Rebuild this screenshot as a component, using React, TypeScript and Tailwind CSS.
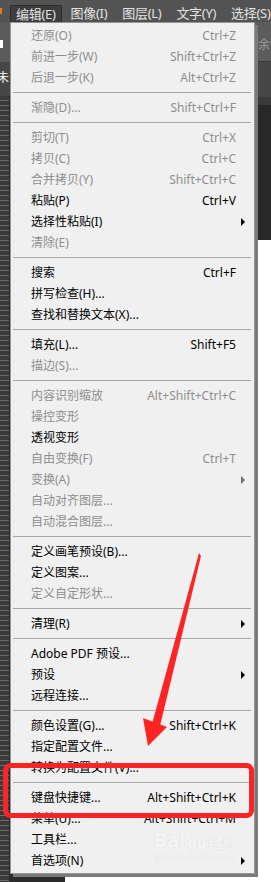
import React from 'react';

type Item = { t: string; s?: string; d?: boolean; sub?: boolean };
type Row = Item | 'sep';

const rows: Row[] = [
  { t: '还原(O)', s: 'Ctrl+Z', d: true },
  { t: '前进一步(W)', s: 'Shift+Ctrl+Z', d: true },
  { t: '后退一步(K)', s: 'Alt+Ctrl+Z', d: true },
  'sep',
  { t: '渐隐(D)...', s: 'Shift+Ctrl+F', d: true },
  'sep',
  { t: '剪切(T)', s: 'Ctrl+X', d: true },
  { t: '拷贝(C)', s: 'Ctrl+C', d: true },
  { t: '合并拷贝(Y)', s: 'Shift+Ctrl+C', d: true },
  { t: '粘贴(P)', s: 'Ctrl+V' },
  { t: '选择性粘贴(I)', sub: true },
  { t: '清除(E)', d: true },
  'sep',
  { t: '搜索', s: 'Ctrl+F' },
  { t: '拼写检查(H)...' },
  { t: '查找和替换文本(X)...' },
  'sep',
  { t: '填充(L)...', s: 'Shift+F5' },
  { t: '描边(S)...', d: true },
  'sep',
  { t: '内容识别缩放', s: 'Alt+Shift+Ctrl+C', d: true },
  { t: '操控变形', d: true },
  { t: '透视变形' },
  { t: '自由变换(F)', s: 'Ctrl+T', d: true },
  { t: '变换(A)', sub: true, d: true },
  { t: '自动对齐图层...', d: true },
  { t: '自动混合图层...', d: true },
  'sep',
  { t: '定义画笔预设(B)...' },
  { t: '定义图案...' },
  { t: '定义自定形状...', d: true },
  'sep',
  { t: '清理(R)', sub: true },
  'sep',
  { t: 'Adobe PDF 预设...' },
  { t: '预设', sub: true },
  { t: '远程连接...' },
  'sep',
  { t: '颜色设置(G)...', s: 'Shift+Ctrl+K' },
  { t: '指定配置文件...' },
  { t: '转换为配置文件(V)...' },
  'sep',
  { t: '键盘快捷键...', s: 'Alt+Shift+Ctrl+K' },
  { t: '菜单(U)...', s: 'Alt+Shift+Ctrl+M' },
  { t: '工具栏...' },
  { t: '首选项(N)', sub: true },
];

const topMenus = ['编辑(E)', '图像(I)', '图层(L)', '文字(Y)', '选择(S)'];

function MenuRow({ item }: { item: Item }) {
  return (
    <div
      className={`h-[21px] flex items-center pl-[20px] pr-[18px] relative ${
        item.d ? 'text-[#8e8e8e]' : 'text-black'
      }`}
    >
      <span className="whitespace-nowrap">{item.t}</span>
      {item.s && <span className="ml-auto whitespace-nowrap">{item.s}</span>}
      {item.sub && (
        <span
          className={`absolute right-[9px] top-[7px] w-0 h-0 border-y-[4px] border-y-transparent border-l-[4px] ${
            item.d ? 'border-l-[#6a6a6a]' : 'border-l-black'
          }`}
        />
      )}
    </div>
  );
}

export default function App() {
  return (
    <div
      className="w-[271px] h-[882px] relative overflow-hidden bg-[#2b2b2b] flex flex-col"
      style={{ fontFamily: '"Noto Sans", "Noto Sans CJK SC", sans-serif' }}
    >
      {/* menu bar */}
      <div className="h-[22px] bg-[#535353] flex items-end text-[13px] text-[#e2e2e2] relative shrink-0">
        <div className="absolute left-0 top-[8px] w-[2px] h-[6px] bg-[#e07b1a]" />
        <div className="flex items-end pl-[10px] gap-[3px]">
          {topMenus.map((m, i) => (
            <div
              key={m}
              className={`h-[17px] px-[5px] flex items-center whitespace-nowrap leading-none tracking-[-0.3px] ${
                i === 0 ? 'bg-[#3d3d3d] border border-b-0 border-[#2e2e2e]' : 'border border-transparent'
              }`}
            >
              {m}
            </div>
          ))}
        </div>
      </div>

      <div className="flex flex-1 min-h-0">
        {/* left strip */}
        <div className="w-[10px] flex flex-col shrink-0">
          <div className="h-[40px] bg-[#5b5b5b] relative">
            <div className="absolute left-0 top-[18px] w-[3px] h-[8px] bg-white" />
          </div>
          <div className="h-[34px] bg-[#474747] text-white text-[12px] leading-none pt-[10px] -ml-[3px]">未</div>
          <div className="flex-1 bg-[#3a3a3a] bg-[repeating-linear-gradient(to_bottom,transparent_0,transparent_4px,#6b6b6b_4px,#6b6b6b_5px)] border-r border-[#2a2a2a]" />
        </div>

        {/* menu */}
        <div className="w-[245px] shrink-0 self-start bg-[#f0f0f0] border border-[#979797] shadow-[3px_3px_0_#7a7a7a] py-[2px] text-[12px] relative z-10">
          {rows.map((r, i) =>
            r === 'sep' ? (
              <div key={i} className="h-[9px] flex items-center pl-[2px] pr-[3px]">
                <div className="h-px w-full bg-[#a8a8a8]" />
              </div>
            ) : (
              <MenuRow key={i} item={r} />
            )
          )}
        </div>

        {/* right strip */}
        <div className="flex-1 flex flex-col">
          <div className="h-[40px] bg-[#5c5c5c] text-[#9c9c9c] text-[12px] pt-[14px] pl-[3px] whitespace-nowrap border-b border-[#3a3a3a]">余锯</div>
          <div className="h-[35px] bg-[#474747]" />
          <div className="h-[8px] bg-[#3a3a3a]" />
          <div className="h-[135px] bg-[#282828]" />
          <div className="flex-1 bg-white" />
        </div>
      </div>

      {/* bottom strip under the menu */}
      <div className="absolute left-[65px] right-0 bottom-0 h-[8px] bg-white" />

      {/* watermark */}
      <div className="absolute left-[154px] top-[830px] z-20 pointer-events-none text-[#f6f6f6] [text-shadow:0_0_1px_#cfcfcf] leading-none">
        <div className="flex items-end gap-[2px]">
          <span className="text-[20px] font-bold">Bai</span>
          <span className="text-[15px] font-bold">du</span>
          <span className="text-[14px] font-bold">经验</span>
        </div>
        <div className="text-[9px] mt-[2px] ml-[2px]">jingyan.baidu.com</div>
      </div>

      {/* red annotation */}
      <svg className="absolute left-0 top-0 z-30 pointer-events-none" width="271" height="882" viewBox="0 0 271 882">
        <polygon points="199,553 201,556 160,726 152,724" fill="#ff2424" />
        <polygon points="143,718 167,727 148,746" fill="#ff2424" />
        <rect x="5.5" y="765.5" width="246" height="50" rx="5" fill="none" stroke="#ff2424" strokeWidth="5" />
      </svg>
    </div>
  );
}
